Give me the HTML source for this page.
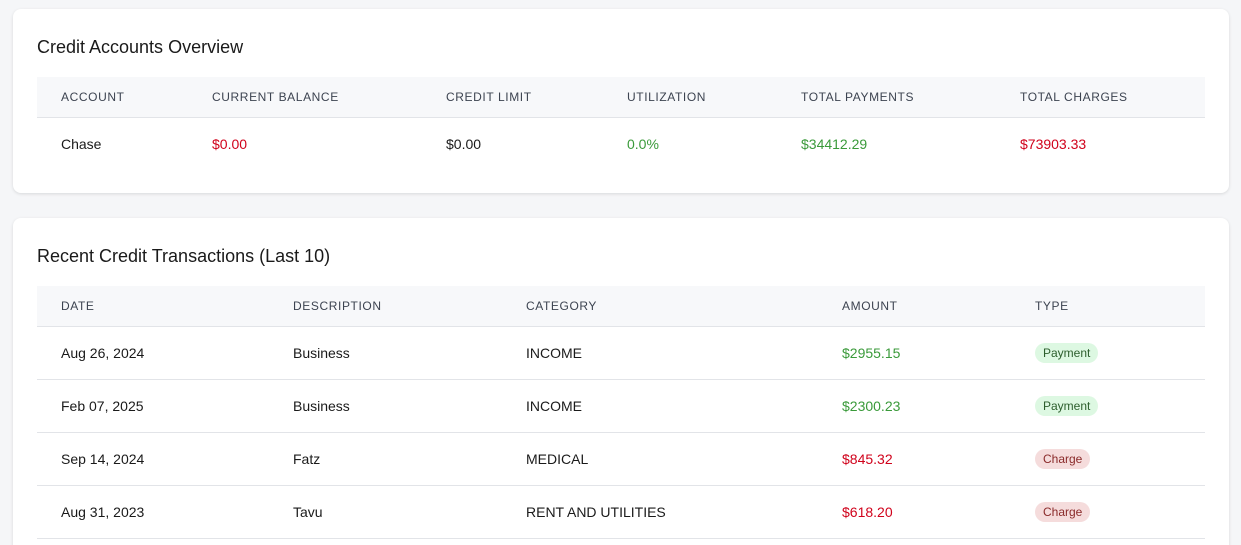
<!DOCTYPE html>
<html><head><style>
html,body{margin:0;height:545px;overflow:hidden}
body{background:#f5f6f8;font-family:"Liberation Sans",sans-serif;width:1241px;position:relative}
.card{position:absolute;left:13px;width:1216px;background:#fff;border-radius:8px;box-shadow:0 1px 3px rgba(0,0,0,.12)}
.t{position:absolute;left:24px;font-size:18px;color:#1a1a1a}
.hd{position:absolute;left:24px;width:1168px;height:40px;background:#f7f8fa;border-bottom:1px solid #e2e4e8}
.row{position:absolute;left:24px;width:1168px;height:52px;border-bottom:1px solid #e2e4e8}
.c{position:absolute;top:0;height:100%;display:flex;align-items:center;font-size:14px;color:#1a1a1a;white-space:nowrap}
.hd .c{font-size:12px;letter-spacing:0.6px;color:#3c4350}
.r{color:#d0021b}.g{color:#3a9a3a}
.b{font-size:12px;padding:3px 8px;border-radius:12px}
.bp{background:#ddf8e2;color:#2d5e2d}.bc{background:#f5dcdc;color:#8a2a2a}
</style></head><body>
<div class="card" style="top:9px;height:184px">
<div class="t" style="top:28px">Credit Accounts Overview</div>
<div class="hd" style="top:68px">
<div class="c" style="left:24px">ACCOUNT</div><div class="c" style="left:175px">CURRENT BALANCE</div><div class="c" style="left:409px">CREDIT LIMIT</div><div class="c" style="left:590px">UTILIZATION</div><div class="c" style="left:764px">TOTAL PAYMENTS</div><div class="c" style="left:983px">TOTAL CHARGES</div></div>
<div class="row" style="top:109px;border:none">
<div class="c" style="left:24px">Chase</div><div class="c r" style="left:175px">$0.00</div><div class="c" style="left:409px">$0.00</div><div class="c g" style="left:590px">0.0%</div><div class="c g" style="left:764px">$34412.29</div><div class="c r" style="left:983px">$73903.33</div></div>
</div>
<div class="card" style="top:218px;height:340px">
<div class="t" style="top:28px">Recent Credit Transactions (Last 10)</div>
<div class="hd" style="top:68px">
<div class="c" style="left:24px">DATE</div><div class="c" style="left:256px">DESCRIPTION</div><div class="c" style="left:489px">CATEGORY</div><div class="c" style="left:805px">AMOUNT</div><div class="c" style="left:998px">TYPE</div></div>
<div class="row" style="top:109px"><div class="c" style="left:24px">Aug 26, 2024</div><div class="c" style="left:256px">Business</div><div class="c" style="left:489px">INCOME</div><div class="c g" style="left:805px">$2955.15</div><div class="c" style="left:998px"><span class="b bp">Payment</span></div></div>
<div class="row" style="top:162px"><div class="c" style="left:24px">Feb 07, 2025</div><div class="c" style="left:256px">Business</div><div class="c" style="left:489px">INCOME</div><div class="c g" style="left:805px">$2300.23</div><div class="c" style="left:998px"><span class="b bp">Payment</span></div></div>
<div class="row" style="top:215px"><div class="c" style="left:24px">Sep 14, 2024</div><div class="c" style="left:256px">Fatz</div><div class="c" style="left:489px">MEDICAL</div><div class="c r" style="left:805px">$845.32</div><div class="c" style="left:998px"><span class="b bc">Charge</span></div></div>
<div class="row" style="top:268px"><div class="c" style="left:24px">Aug 31, 2023</div><div class="c" style="left:256px">Tavu</div><div class="c" style="left:489px">RENT AND UTILITIES</div><div class="c r" style="left:805px">$618.20</div><div class="c" style="left:998px"><span class="b bc">Charge</span></div></div>
</div>
</body></html>
